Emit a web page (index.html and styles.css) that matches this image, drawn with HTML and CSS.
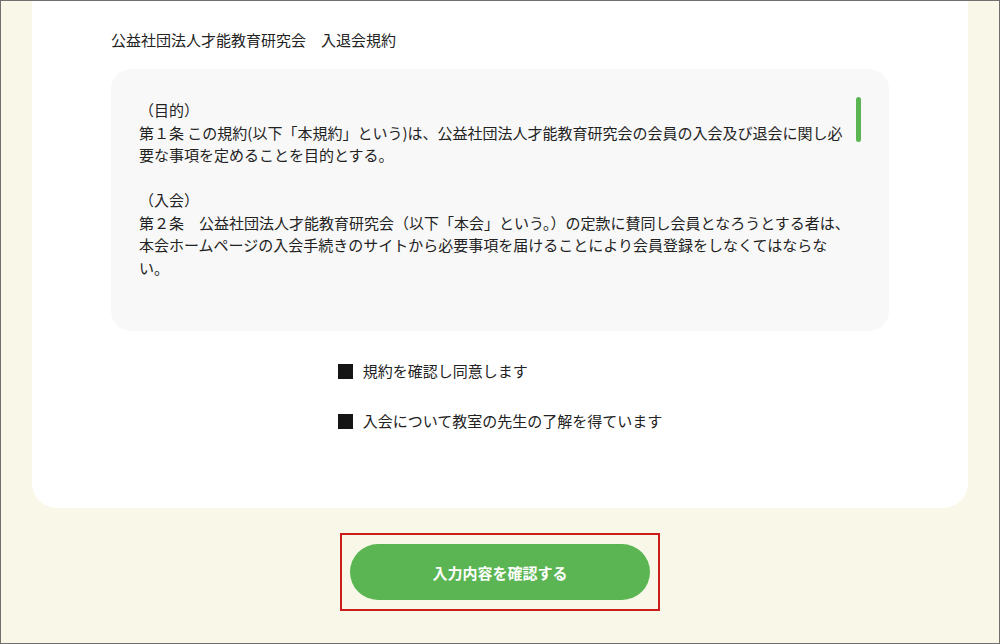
FILE: index.html
```html
<!DOCTYPE html>
<html lang="ja">
<head>
    <meta charset="UTF-8">
    <meta name="viewport" content="width=device-width, initial-scale=1.0">
    <title>入退会規約</title>
    <link rel="stylesheet" href="styles.css">
</head>
<body>
    <div class="page">
        <div class="form-card">
            <h2 class="terms-title">公益社団法人才能教育研究会　入退会規約</h2>

            <div class="terms-box">
                <div class="terms-scroll">
                    <p>（目的）<br>第１条 この規約(以下「本規約」という)は、公益社団法人才能教育研究会の会員の入会及び退会に関し必要な事項を定めることを目的とする。</p>
                    <p>（入会）<br>第２条　公益社団法人才能教育研究会（以下「本会」という。）の定款に賛同し会員となろうとする者は、本会ホームページの入会手続きのサイトから必要事項を届けることにより会員登録をしなくてはならない。</p>
                </div>
                <!-- scrollbar thumb (browser scrollbars are hidden in the screenshot) -->
                <span class="scroll-thumb"></span>
            </div>

            <div class="agree-list">
                <label class="agree-item"><span class="check-box"></span>規約を確認し同意します</label>
                <label class="agree-item"><span class="check-box"></span>入会について教室の先生の了解を得ています</label>
            </div>
        </div>

        <div class="submit-area">
            <button type="button" class="submit-btn">入力内容を確認する</button>
        </div>
    </div>
</body>
</html>
```

FILE: styles.css
```css
/* General Styles */
html, body {
    margin: 0;
    padding: 0;
    font-family: "Noto Sans CJK JP", "Noto Sans", sans-serif;
    color: #222;
}

.page {
    height: 100vh;
    box-sizing: border-box;
    border: 1px solid #707070;
    background-color: #f8f7e8;
    padding: 0 31px;
    overflow: hidden;
}

.form-card {
    background: #fff;
    border-radius: 0 0 25px 25px;
    padding: 27px 79px 75px;
}

.terms-title {
    margin: 0 0 17px;
    font-size: 15px;
    font-weight: normal;
    line-height: 24px;
}

/* Terms box */
.terms-box {
    position: relative;
    background-color: #f8f8f8;
    border-radius: 20px;
    padding: 30px 28px 28px;
}

.terms-scroll {
    height: 204px;
    overflow-y: auto;
    padding-right: 10px;
    font-size: 15px;
    line-height: 1.5;
}

.terms-scroll p {
    margin: 0 0 1.5em;
}

.scroll-thumb {
    position: absolute;
    top: 28px;
    right: 28px;
    width: 5px;
    height: 45px;
    border-radius: 3px;
    background: #5bb553;
}

/* Checkboxes */
.agree-list {
    width: fit-content;
    margin: 28px auto 0;
    display: flex;
    flex-direction: column;
    gap: 26px;
}

.agree-item {
    display: flex;
    align-items: center;
    gap: 10px;
    font-size: 15px;
    line-height: 24px;
}

.check-box {
    width: 15px;
    height: 15px;
    background: #151515;
}

/* Submit */
.submit-area {
    width: fit-content;
    margin: 25px auto 0;
    border: 2px solid #cc1d1d;
    padding: 9px 8px;
}

.submit-btn {
    display: block;
    width: 300px;
    height: 56px;
    border: none;
    border-radius: 28px;
    background-color: #5bb553;
    color: #fff;
    font-family: inherit;
    font-size: 15px;
    font-weight: bold;
    cursor: pointer;
}
```
